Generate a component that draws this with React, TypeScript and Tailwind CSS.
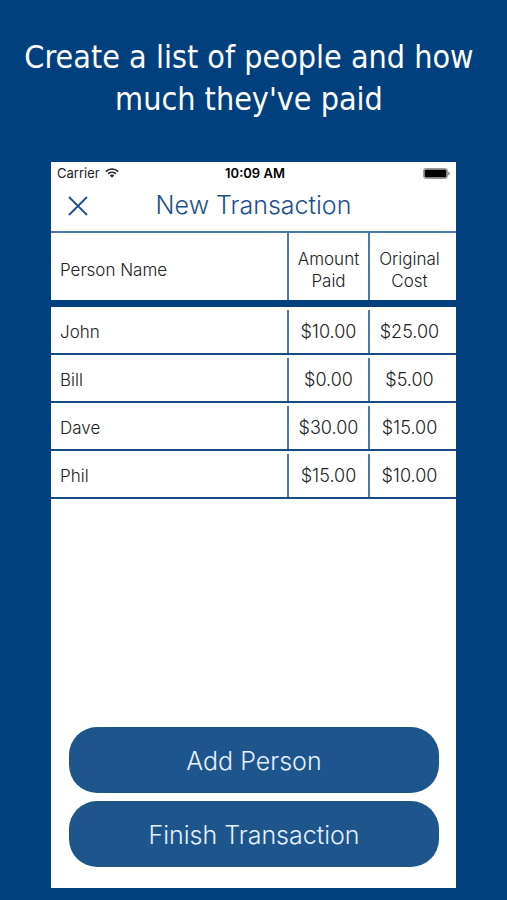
type Entry = { name: string; paid: string; cost: string };

const entries: Entry[] = [
  { name: "John", paid: "$10.00", cost: "$25.00" },
  { name: "Bill", paid: "$0.00", cost: "$5.00" },
  { name: "Dave", paid: "$30.00", cost: "$15.00" },
  { name: "Phil", paid: "$15.00", cost: "$10.00" },
];

function WifiIcon() {
  return (
    <svg viewBox="0 0 14 10" className="h-[10px] w-[14px]" fill="none" stroke="#222" strokeWidth="1.6" aria-hidden="true">
      <path d="M0.8 3.6A8.8 8.8 0 0 1 13.2 3.6" />
      <path d="M3.1 5.9A5.5 5.5 0 0 1 10.9 5.9" />
      <path d="M7 9.8L4.8 7.6A3.1 3.1 0 0 1 9.2 7.6Z" fill="#222" stroke="none" />
    </svg>
  );
}

function BatteryIcon() {
  return (
    <svg viewBox="0 0 27 11" className="h-[11px] w-[27px]" aria-hidden="true">
      <rect x="0.5" y="0.5" width="24" height="10" rx="2" fill="#fff" stroke="#999" />
      <rect x="1.5" y="1.5" width="22" height="8" rx="1" fill="#000" />
      <path d="M25.5 3.5a2.4 2.4 0 0 1 0 4z" fill="#333" />
    </svg>
  );
}

function StatusBar() {
  return (
    <div className="grid h-[22px] grid-cols-3 items-center px-[6px] font-['Inter',sans-serif] text-[13px] leading-4 font-normal text-[#222]">
      <div className="flex items-center gap-[5px]">
        <span>Carrier</span>
        <WifiIcon />
      </div>
      <span className="pl-[3px] text-center font-semibold text-black">10:09 AM</span>
      <div className="flex justify-end">
        <BatteryIcon />
      </div>
    </div>
  );
}

function HeadCell({ label, last = false }: { label: string; last?: boolean }) {
  return (
    <th scope="col" className="border-t-2 border-b-[7px] border-t-[#4b78af] border-b-[#00407f] p-0 font-light">
      <div className={`flex h-[67px] items-center justify-center border-l-2 border-[#4b78af] pt-[6px] ${last ? "pr-[7px]" : ""}`}>
        {label}
      </div>
    </th>
  );
}

function AmountCell({ value, last = false }: { value: string; last?: boolean }) {
  return (
    <td className="h-12 border-b-2 border-[#174b85] p-0 align-bottom text-[18px]">
      <div className={`flex h-[43px] items-center justify-center border-l-2 border-[#4b78af] ${last ? "pr-[7px]" : ""}`}>
        {value}
      </div>
    </td>
  );
}

export default function App() {
  return (
    <div className="flex min-h-screen flex-col bg-[#00407f] px-[51px] pb-3">
      <h1 className="-mx-[34px] pt-9 pr-[9px] text-center font-['DejaVu_Sans_Condensed','DejaVu_Sans',sans-serif] text-[32px] leading-[42px] text-white">
        Create a list of people and how much they've paid
      </h1>
      <main className="mt-[42px] flex grow flex-col bg-white font-['Inter','Liberation_Sans',sans-serif] font-light text-[#222]">
        <StatusBar />
        <header className="grid h-[47px] grid-cols-[54px_1fr_54px] items-center pb-[5px] text-[#1d4f8d]">
          <button type="button" aria-label="Close" className="flex justify-center pt-[2px]">
            <svg viewBox="0 0 20 20" className="size-5" fill="none" stroke="currentColor" strokeWidth="1.8" aria-hidden="true">
              <path d="M1 1L19 19M19 1L1 19" />
            </svg>
          </button>
          <h2 className="text-center text-[25px] leading-8">New Transaction</h2>
        </header>
        <table className="w-full table-fixed border-separate border-spacing-0 text-[17px] leading-[22px]">
          <colgroup>
            <col />
            <col className="w-[81px]" />
            <col className="w-[88px]" />
          </colgroup>
          <thead>
            <tr className="text-center">
              <th scope="col" className="h-[76px] border-t-2 border-b-[7px] border-t-[#4b78af] border-b-[#00407f] p-0 pt-[6px] pl-[9px] text-left font-light">
                Person Name
              </th>
              <HeadCell label="Amount Paid" />
              <HeadCell label="Original Cost" last />
            </tr>
          </thead>
          <tbody>
            {entries.map((entry) => (
              <tr key={entry.name}>
                <td className="h-12 border-b-2 border-[#174b85] p-0 pt-1 pl-[9px]">{entry.name}</td>
                <AmountCell value={entry.paid} />
                <AmountCell value={entry.cost} last />
              </tr>
            ))}
          </tbody>
        </table>
        <div className="mt-auto flex flex-col gap-2 pt-6 pr-[17px] pb-[21px] pl-[18px] text-[25px] leading-8 text-[#e6f1ff]">
          <button type="button" className="h-[66px] rounded-[28px] bg-[#1d558c] pt-[2px]">Add Person</button>
          <button type="button" className="h-[66px] rounded-[28px] bg-[#1d558c] pt-[2px]">Finish Transaction</button>
        </div>
      </main>
    </div>
  );
}
